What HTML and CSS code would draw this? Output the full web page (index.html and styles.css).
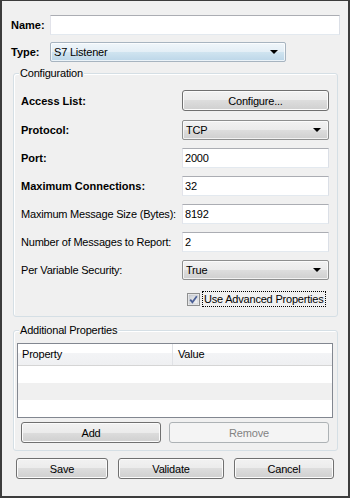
FILE: index.html
```html
<!DOCTYPE html>
<html lang="en">
<head>
    <meta charset="UTF-8">
    <title>S7 Listener</title>
    <link rel="stylesheet" href="styles.css">
</head>
<body>
    <div class="dialog">
        <div class="top-row name-row">
            <label class="top-label">Name:</label>
            <input class="text-input name-input" type="text" value="">
        </div>
        <div class="top-row type-row">
            <label class="top-label">Type:</label>
            <div class="combo combo-hot type-combo">S7 Listener<span class="arrow"></span></div>
        </div>

        <div class="group config">
            <div class="group-title">Configuration</div>

            <div class="cfg-row access-row">
                <span class="row-label bold">Access List:</span>
                <button class="btn ctrl tall">Configure...</button>
            </div>
            <div class="cfg-row protocol-row">
                <span class="row-label bold">Protocol:</span>
                <div class="combo ctrl">TCP<span class="arrow"></span></div>
            </div>
            <div class="cfg-row">
                <span class="row-label bold">Port:</span>
                <input class="text-input ctrl" type="text" value="2000">
            </div>
            <div class="cfg-row">
                <span class="row-label bold">Maximum Connections:</span>
                <input class="text-input ctrl" type="text" value="32">
            </div>
            <div class="cfg-row">
                <span class="row-label">Maximum Message Size (Bytes):</span>
                <input class="text-input ctrl" type="text" value="8192">
            </div>
            <div class="cfg-row">
                <span class="row-label">Number of Messages to Report:</span>
                <input class="text-input ctrl" type="text" value="2">
            </div>
            <div class="cfg-row">
                <span class="row-label">Per Variable Security:</span>
                <div class="combo ctrl">True<span class="arrow"></span></div>
            </div>

            <div class="check-row">
                <svg class="check" width="13" height="13" viewBox="0 0 13 13">
                    <defs>
                        <linearGradient id="cbg" x1="0" y1="0" x2="1" y2="1">
                            <stop offset="0" stop-color="#cbcfd5"/>
                            <stop offset="1" stop-color="#f6f6f6"/>
                        </linearGradient>
                    </defs>
                    <rect x="0.5" y="0.5" width="12" height="12" fill="#f4f4f4" stroke="#8e8f8f"/>
                    <rect x="2" y="2" width="9" height="9" fill="url(#cbg)" stroke="#b8bcc2" stroke-width="0.6"/>
                    <path d="M3.2 6.6 L5.4 9.2 L9.8 3.2" fill="none" stroke="#4b5f96" stroke-width="1.8"/>
                </svg>
                <span class="focus-text">Use Advanced Properties</span>
            </div>
        </div>

        <div class="group props">
            <div class="group-title">Additional Properties</div>
            <div class="list">
                <div class="list-head">
                    <div class="head-cell col-prop">Property</div>
                    <div class="head-cell col-val">Value</div>
                </div>
                <div class="list-row"></div>
                <div class="list-row alt"></div>
                <div class="list-row"></div>
            </div>
            <div class="props-buttons">
                <button class="btn add-btn">Add</button>
                <button class="btn remove-btn" disabled>Remove</button>
            </div>
        </div>

        <div class="footer">
            <button class="btn save-btn">Save</button>
            <button class="btn validate-btn">Validate</button>
            <button class="btn cancel-btn">Cancel</button>
        </div>
    </div>
</body>
</html>
```

FILE: styles.css
```css
* {
    box-sizing: border-box;
}
body {
    margin: 0;
    font-family: "Liberation Sans", Arial, sans-serif;
    font-size: 11px;
    letter-spacing: -0.2px;
    color: #000;
}
.dialog {
    width: 350px;
    height: 498px;
    background: #f0f0f0;
    border: 2px solid #3c3c3c;
    border-top-width: 1px;
}
.bold {
    font-weight: bold;
    letter-spacing: 0;
}

/* top fields */
.top-row {
    display: flex;
    align-items: center;
    height: 20px;
    margin: 0 8px 0 9px;
}
.name-row {
    margin-top: 14px;
}
.type-row {
    margin-top: 7px;
}
.top-label {
    width: 39px;
    font-weight: bold;
    letter-spacing: 0;
}
.name-input {
    width: 290px;
}
.type-combo {
    width: 236px;
}

/* controls */
.text-input {
    height: 20px;
    border: 1px solid #abadb3;
    border-left-color: #e2e3ea;
    border-right-color: #dbdfe6;
    border-bottom-color: #e3e9ef;
    background: #fff;
    font: inherit;
    letter-spacing: inherit;
    padding: 0 2px;
    margin: 0;
    outline: none;
}
.combo {
    position: relative;
    height: 20px;
    line-height: 18px;
    padding: 0 3px;
    border: 1px solid #8e8f8f;
    border-radius: 2px;
    background: linear-gradient(#f2f2f2 0%, #ebebeb 50%, #dddddd 50%, #cfcfcf 100%);
    box-shadow: inset 0 0 0 1px rgba(255, 255, 255, 0.7);
}
.combo-hot {
    border-color: #a7b4c0;
    background: linear-gradient(#f0f6fa 0%, #e3eef6 50%, #d0e4f0 50%, #bcd6e8 100%);
}
.arrow {
    position: absolute;
    right: 7px;
    top: 7px;
    width: 0;
    height: 0;
    border-left: 4px solid transparent;
    border-right: 4px solid transparent;
    border-top: 4px solid #000;
}
.btn {
    height: 21px;
    padding: 0;
    margin: 0;
    font: inherit;
    letter-spacing: inherit;
    color: #000;
    border: 1px solid #707070;
    border-radius: 3px;
    background: linear-gradient(#f2f2f2 0%, #ebebeb 50%, #dddddd 50%, #cfcfcf 100%);
    box-shadow: inset 0 0 0 1px #fbfbfb;
}
.btn:disabled {
    color: #838383;
    border-color: #adb2b5;
    background: #f4f4f4;
    box-shadow: none;
}

/* group boxes */
.group {
    margin: 11px 10px 0 11px;
    border: 1px solid #d5dfe5;
    border-radius: 3px;
    box-shadow: inset 1px 1px 0 #fff;
}
.group-title {
    width: max-content;
    margin: -7px 0 0 5px;
    padding: 0 1px;
    line-height: 13px;
    background: #f0f0f0;
}
.config {
    padding-bottom: 9px;
}
.cfg-row {
    display: flex;
    align-items: center;
    height: 20px;
    margin: 8px 8px 0 7px;
}
.access-row {
    height: 21px;
    margin-top: 10px;
}
.protocol-row {
    margin-top: 9px;
}
.row-label {
    width: 161px;
    white-space: nowrap;
}
.ctrl {
    width: 147px;
}
.check-row {
    display: flex;
    align-items: center;
    height: 16px;
    margin: 11px 0 0 173px;
}
.check {
    display: block;
    margin-right: 2px;
}
.focus-text {
    line-height: 14px;
    padding: 0 1px;
    border: 1px dotted #000;
    white-space: nowrap;
}

/* additional properties */
.props {
    margin-top: 13px;
    padding-bottom: 7px;
}
.list {
    margin: 6px 4px 0 3px;
    border: 1px solid #828790;
    background: #fff;
}
.list-head {
    display: flex;
    height: 22px;
    border-bottom: 1px solid #d5d5d5;
    background: linear-gradient(#ffffff 0%, #ffffff 45%, #f3f4f6 45%, #eff0f2 100%);
}
.head-cell {
    line-height: 21px;
}
.col-prop {
    width: 155px;
    padding-left: 4px;
    border-right: 1px solid #e0e2e6;
}
.col-val {
    flex: 1;
    padding-left: 5px;
}
.list-row {
    height: 17px;
}
.list-row.alt {
    background: #f0f0f0;
}
.props-buttons {
    display: flex;
    gap: 8px;
    margin: 4px 8px 0 7px;
}
.add-btn {
    width: 140px;
}
.remove-btn {
    width: 160px;
}

/* footer */
.footer {
    display: flex;
    gap: 10px;
    margin: 7px 0 0 14px;
}
.save-btn {
    width: 92px;
}
.validate-btn {
    width: 106px;
}
.cancel-btn {
    width: 100px;
}
```
